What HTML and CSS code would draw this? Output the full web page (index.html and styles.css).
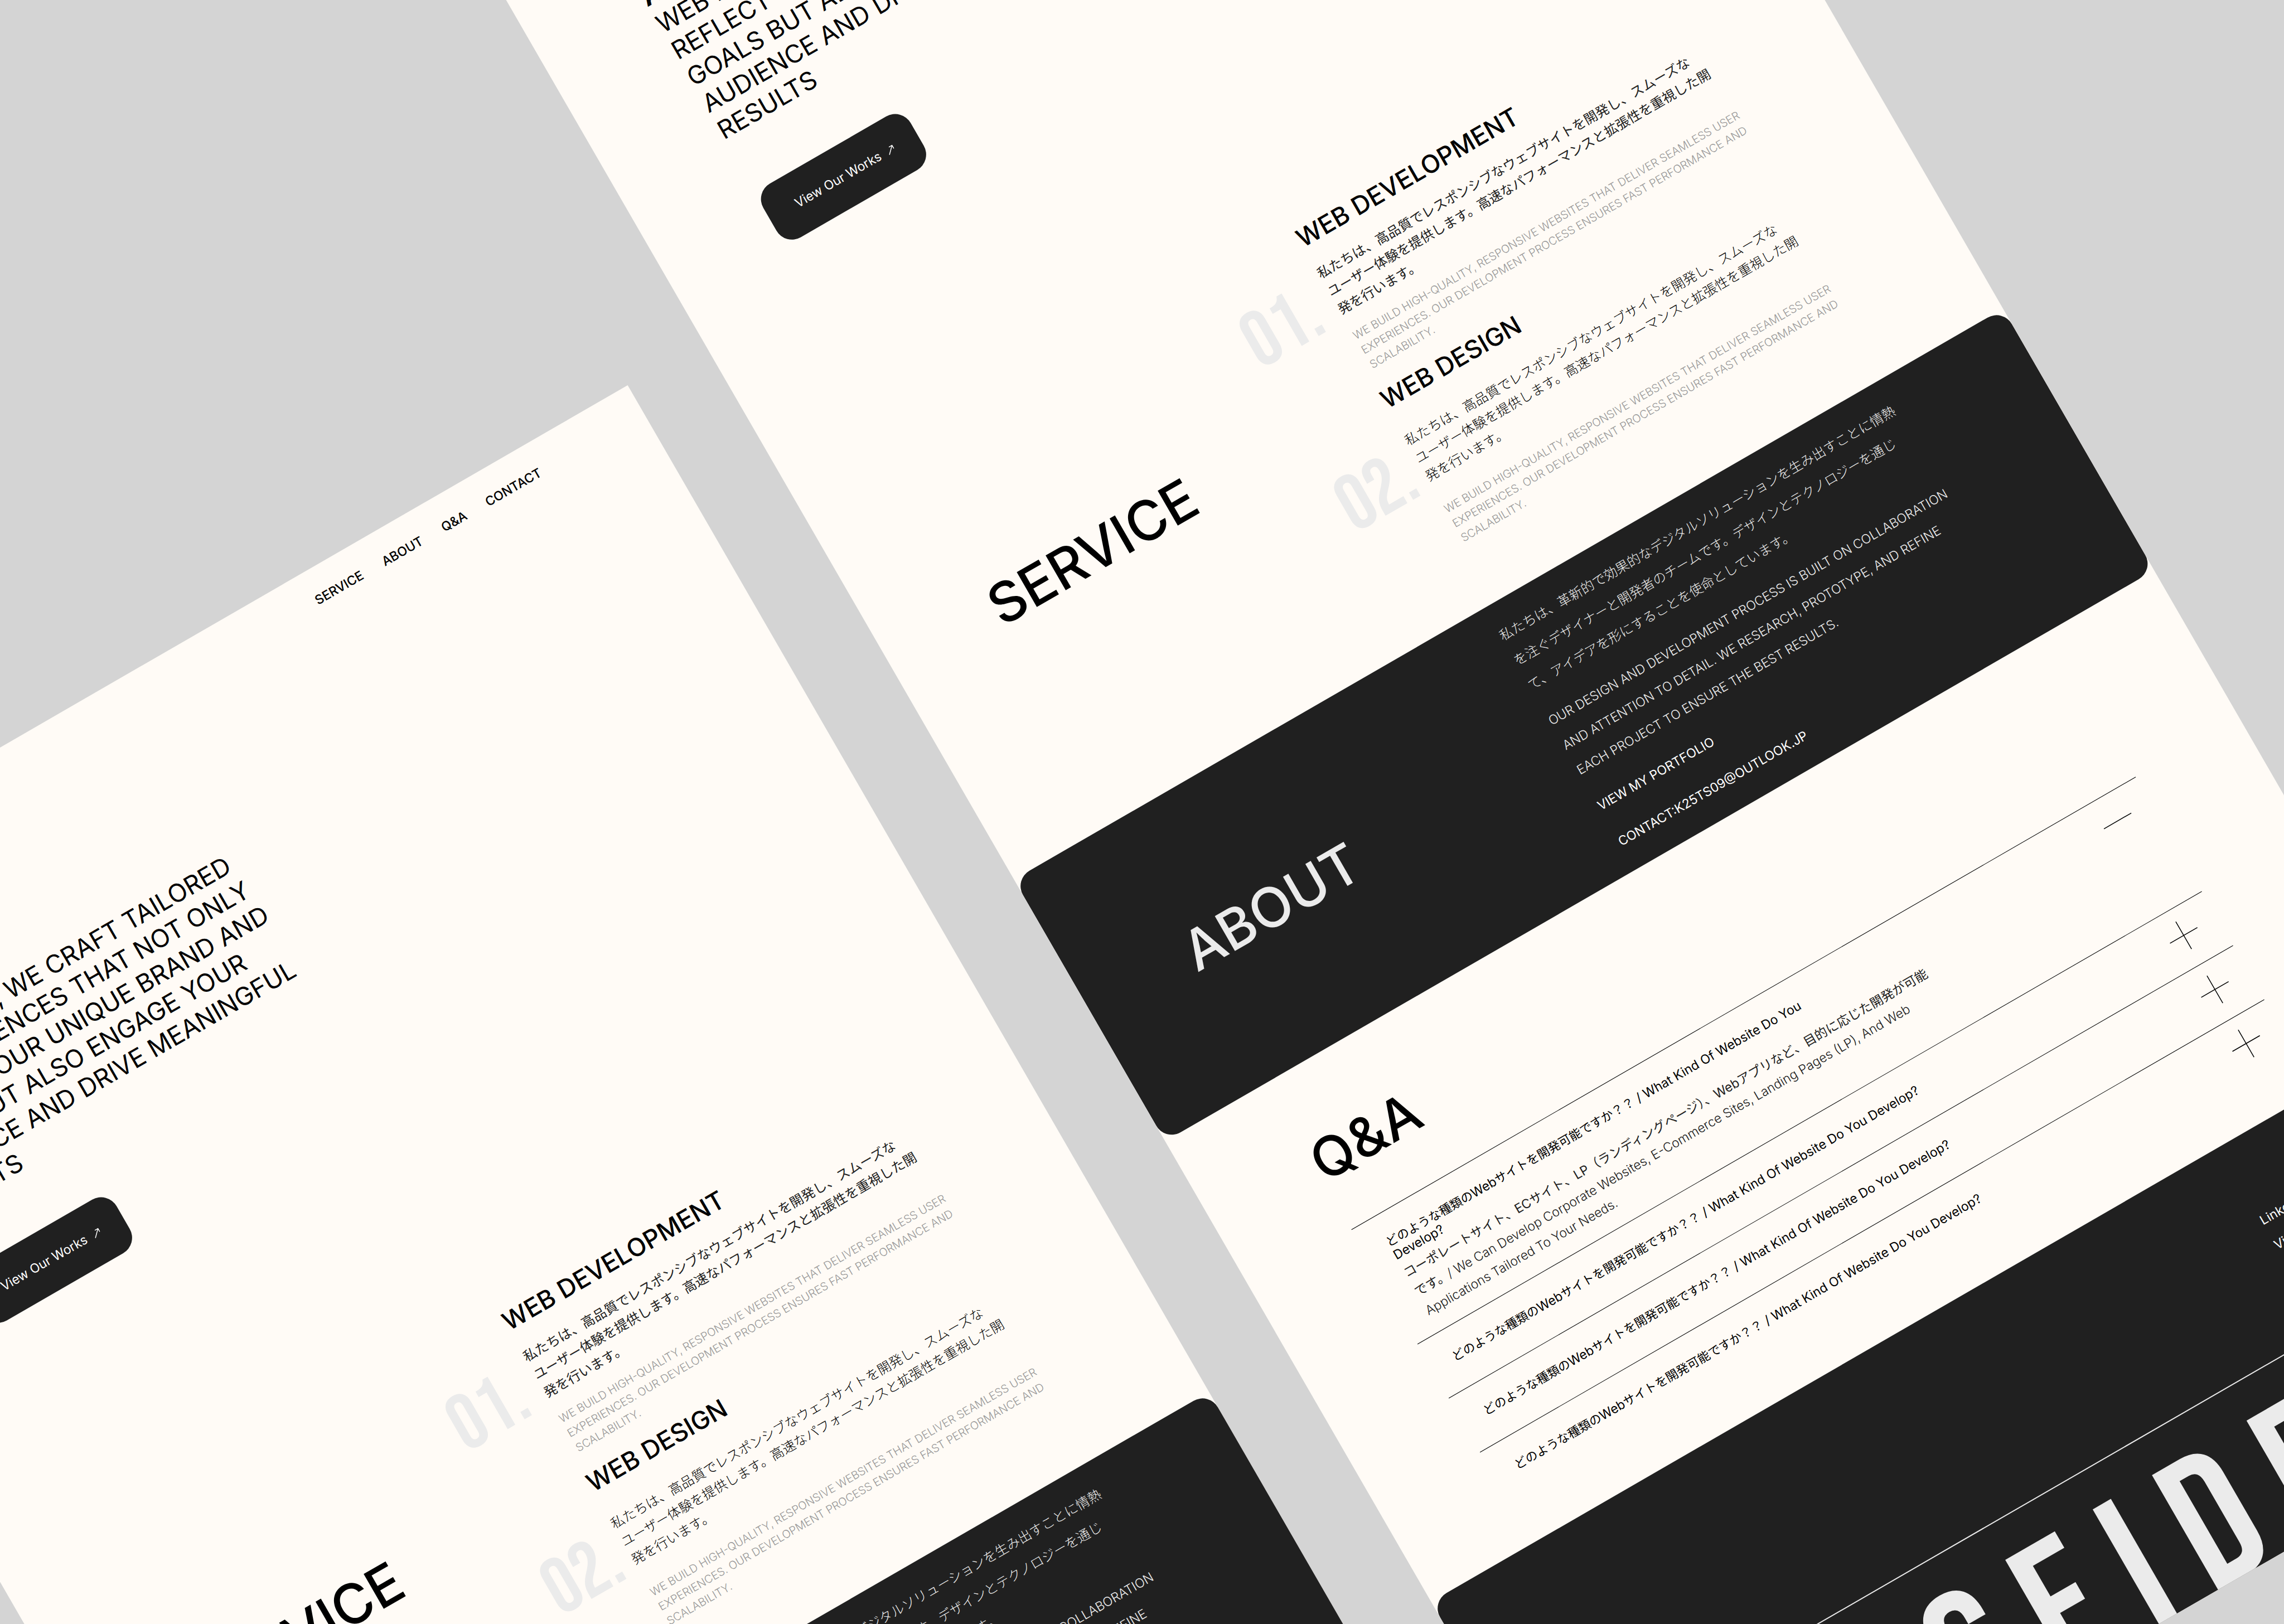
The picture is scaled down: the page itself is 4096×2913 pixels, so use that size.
FILE: index.html
```html
<!DOCTYPE html>
<html lang="en">
<head>
<meta charset="utf-8">
<meta name="viewport" content="width=device-width, initial-scale=1">
<title>Web studio</title>
<link rel="stylesheet" href="styles.css">
</head>
<body>
<main class="canvas">

  <article class="page page--left">
    <header class="header">
      <nav class="nav">
        <a href="#service">SERVICE</a>
        <a href="#about">ABOUT</a>
        <a href="#qa">Q&amp;A</a>
        <a href="#contact">CONTACT</a>
      </nav>
    </header>
    <section class="hero">
      <p class="hero__text"><strong>AT CODSEIDE</strong>, WE CRAFT TAILORED<br>WEB EXPERIENCES THAT NOT ONLY<br>REFLECT YOUR UNIQUE BRAND AND<br>GOALS BUT ALSO ENGAGE YOUR<br>AUDIENCE AND DRIVE MEANINGFUL<br>RESULTS</p>
      <button class="cta" type="button">View Our Works
        <svg class="cta__arrow" viewBox="0 0 14 14" aria-hidden="true"><path d="M.5 13.5 13 1M6.5 1H13V7.5"/></svg>
      </button>
    </section>
    <section class="services">
      <h2 class="title">SERVICE</h2>
      <ol class="services__list">
        <li class="service service--first">
          <span class="service__number">01.</span>
          <div class="service__body">
            <h3>WEB DEVELOPMENT</h3>
            <p class="service__ja" lang="ja">私たちは、高品質でレスポンシブなウェブサイトを開発し、スムーズなユーザー体験を提供します。高速なパフォーマンスと拡張性を重視した開発を行います。</p>
            <p class="service__en">WE BUILD HIGH-QUALITY, RESPONSIVE WEBSITES THAT DELIVER SEAMLESS USER EXPERIENCES. OUR DEVELOPMENT PROCESS ENSURES FAST PERFORMANCE AND SCALABILITY.</p>
          </div>
        </li>
        <li class="service service--second">
          <span class="service__number">02.</span>
          <div class="service__body">
            <h3>WEB DESIGN</h3>
            <p class="service__ja" lang="ja">私たちは、高品質でレスポンシブなウェブサイトを開発し、スムーズなユーザー体験を提供します。高速なパフォーマンスと拡張性を重視した開発を行います。</p>
            <p class="service__en">WE BUILD HIGH-QUALITY, RESPONSIVE WEBSITES THAT DELIVER SEAMLESS USER EXPERIENCES. OUR DEVELOPMENT PROCESS ENSURES FAST PERFORMANCE AND SCALABILITY.</p>
          </div>
        </li>
      </ol>
    </section>
    <section class="about">
      <h2 class="title title--light">ABOUT</h2>
      <div class="about__body">
        <p class="about__ja" lang="ja">私たちは、革新的で効果的なデジタルソリューションを生み出すことに情熱を注ぐデザイナーと開発者のチームです。デザインとテクノロジーを通じて、アイデアを形にすることを使命としています。</p>
        <p class="about__en">OUR DESIGN AND DEVELOPMENT PROCESS IS BUILT ON COLLABORATION AND ATTENTION TO DETAIL. WE RESEARCH, PROTOTYPE, AND REFINE EACH PROJECT TO ENSURE THE BEST RESULTS.</p>
        <a href="#portfolio">VIEW MY PORTFOLIO</a>
        <a href="mailto:K25TS09@OUTLOOK.JP">CONTACT:K25TS09@OUTLOOK.JP</a>
      </div>
    </section>
  </article>

  <article class="page page--right">
    <header class="header">
      <nav class="nav">
        <a href="#service">SERVICE</a>
        <a href="#about">ABOUT</a>
        <a href="#qa">Q&amp;A</a>
        <a href="#contact">CONTACT</a>
      </nav>
    </header>
    <section class="hero">
      <p class="hero__text"><strong>AT CODSEIDE</strong>, WE CRAFT TAILORED<br>WEB EXPERIENCES THAT NOT ONLY<br>REFLECT YOUR UNIQUE BRAND AND<br>GOALS BUT ALSO ENGAGE YOUR<br>AUDIENCE AND DRIVE MEANINGFUL<br>RESULTS</p>
      <button class="cta" type="button">View Our Works
        <svg class="cta__arrow" viewBox="0 0 14 14" aria-hidden="true"><path d="M.5 13.5 13 1M6.5 1H13V7.5"/></svg>
      </button>
    </section>
    <section class="services" id="service">
      <h2 class="title">SERVICE</h2>
      <ol class="services__list">
        <li class="service service--first">
          <span class="service__number">01.</span>
          <div class="service__body">
            <h3>WEB DEVELOPMENT</h3>
            <p class="service__ja" lang="ja">私たちは、高品質でレスポンシブなウェブサイトを開発し、スムーズなユーザー体験を提供します。高速なパフォーマンスと拡張性を重視した開発を行います。</p>
            <p class="service__en">WE BUILD HIGH-QUALITY, RESPONSIVE WEBSITES THAT DELIVER SEAMLESS USER EXPERIENCES. OUR DEVELOPMENT PROCESS ENSURES FAST PERFORMANCE AND SCALABILITY.</p>
          </div>
        </li>
        <li class="service service--second">
          <span class="service__number">02.</span>
          <div class="service__body">
            <h3>WEB DESIGN</h3>
            <p class="service__ja" lang="ja">私たちは、高品質でレスポンシブなウェブサイトを開発し、スムーズなユーザー体験を提供します。高速なパフォーマンスと拡張性を重視した開発を行います。</p>
            <p class="service__en">WE BUILD HIGH-QUALITY, RESPONSIVE WEBSITES THAT DELIVER SEAMLESS USER EXPERIENCES. OUR DEVELOPMENT PROCESS ENSURES FAST PERFORMANCE AND SCALABILITY.</p>
          </div>
        </li>
      </ol>
    </section>
    <section class="about" id="about">
      <h2 class="title title--light">ABOUT</h2>
      <div class="about__body">
        <p class="about__ja" lang="ja">私たちは、革新的で効果的なデジタルソリューションを生み出すことに情熱を注ぐデザイナーと開発者のチームです。デザインとテクノロジーを通じて、アイデアを形にすることを使命としています。</p>
        <p class="about__en">OUR DESIGN AND DEVELOPMENT PROCESS IS BUILT ON COLLABORATION AND ATTENTION TO DETAIL. WE RESEARCH, PROTOTYPE, AND REFINE EACH PROJECT TO ENSURE THE BEST RESULTS.</p>
        <a href="#portfolio">VIEW MY PORTFOLIO</a>
        <a href="mailto:K25TS09@OUTLOOK.JP">CONTACT:K25TS09@OUTLOOK.JP</a>
      </div>
    </section>
    <section class="qa" id="qa">
      <h2 class="title">Q&amp;A</h2>
      <div class="qa__list">
        <div class="qa__row qa__row--open">
          <div class="qa__text">
            <h3><span class="qa__ja" lang="ja">どのような種類の</span>Web<span class="qa__ja" lang="ja">サイトを開発可能ですか？？</span> / What Kind Of Website Do You<br>Develop?</h3>
            <p><span lang="ja">コーポレートサイト、ECサイト、LP（ランディングページ）、Webアプリなど、目的に応じた開発が可能です。</span>/ We Can Develop Corporate Websites, E-Commerce Sites, Landing Pages (LP), And Web Applications Tailored To Your Needs.</p>
          </div>
          <button class="qa__toggle" type="button" aria-expanded="true" aria-label="Close answer">
            <svg viewBox="0 0 57 57"><path d="M0 28.5H57"/></svg>
          </button>
        </div>
        <div class="qa__row">
          <h3 class="qa__text"><span class="qa__ja" lang="ja">どのような種類の</span>Web<span class="qa__ja" lang="ja">サイトを開発可能ですか？？</span> / What Kind Of Website Do You Develop?</h3>
          <button class="qa__toggle" type="button" aria-expanded="false" aria-label="Open answer">
            <svg viewBox="0 0 57 57"><path d="M0 28.5H57M28.5 0V57"/></svg>
          </button>
        </div>
        <div class="qa__row">
          <h3 class="qa__text"><span class="qa__ja" lang="ja">どのような種類の</span>Web<span class="qa__ja" lang="ja">サイトを開発可能ですか？？</span> / What Kind Of Website Do You Develop?</h3>
          <button class="qa__toggle" type="button" aria-expanded="false" aria-label="Open answer">
            <svg viewBox="0 0 57 57"><path d="M0 28.5H57M28.5 0V57"/></svg>
          </button>
        </div>
        <div class="qa__row">
          <h3 class="qa__text"><span class="qa__ja" lang="ja">どのような種類の</span>Web<span class="qa__ja" lang="ja">サイトを開発可能ですか？？</span> / What Kind Of Website Do You Develop?</h3>
          <button class="qa__toggle" type="button" aria-expanded="false" aria-label="Open answer">
            <svg viewBox="0 0 57 57"><path d="M0 28.5H57M28.5 0V57"/></svg>
          </button>
        </div>
      </div>
    </section>
    <footer class="footer" id="contact">
      <nav class="footer__links">
        <a href="#linkedin">LinkedIn</a>
        <a href="#portfolio">View Portfolio</a>
      </nav>
      <div class="wordmark"><span>S</span><span>E</span><span>I</span><span>D</span><span>E</span></div>
    </footer>
  </article>

</main>
</body>
</html>
```
FILE: styles.css
```css
:root {
  --ink: #202020;
  --paper: #fffbf6;
  --mist: #ebebeb;
  --gutter: 213px;
}

* { box-sizing: border-box; margin: 0; padding: 0; }

body {
  background: #d4d4d4;
  color: #000;
  font-family: Inter, "Noto Sans CJK JP", "Liberation Sans", sans-serif;
  font-weight: 400;
}

a { color: inherit; text-decoration: none; }
button { border: 0; background: none; font: inherit; color: inherit; cursor: pointer; }
ol { list-style: none; }
h2, h3 { font-weight: 500; }

.canvas {
  position: relative;
  width: 100vw;
  height: 100vh;
  overflow: hidden;
}

/* Two tilted page previews laid on the grey board */
.page {
  position: absolute;
  width: 50vw;
  background: var(--paper);
  line-break: strict;
  transform: rotate(-30deg);
  transform-origin: 0 0;
}
.page--left { left: -648px; top: 1715px; }
.page--right { left: 776px; top: -228px; overflow: hidden; }

.title {
  font-size: 99px;
  line-height: 120px;
}
.title--light { color: var(--mist); }

/* Header */
.header { padding: 43px var(--gutter) 0; }
.nav {
  display: flex;
  justify-content: flex-end;
  gap: 42px;
  font-size: 23px;
  line-height: 27px;
  font-weight: 500;
}

/* Hero */
.hero { padding: 287px var(--gutter) 0; }
.hero__text {
  font-size: 45px;
  line-height: 55px;
  white-space: nowrap;
}
.hero__text strong { font-weight: 700; }
.cta {
  display: flex;
  align-items: center;
  gap: 14px;
  margin-top: 98px;
  height: 111px;
  padding: 0 48px 0 54px;
  border-radius: 32px;
  background: var(--ink);
  color: #fff;
  font-size: 23px;
  line-height: 27px;
}
.cta__arrow {
  width: 14px;
  height: 14px;
  fill: none;
  stroke: currentColor;
  stroke-width: 1.5;
}

/* Services */
.services {
  display: flex;
  align-items: center;
  justify-content: space-between;
  padding: 423px var(--gutter) 113px 208px;
}
.services__list {
  display: flex;
  flex-direction: column;
  gap: 24px;
  width: 994px;
}
.service { display: flex; align-items: center; }
.service--first { gap: 34px; }
.service--second { gap: 20px; }
.service__number {
  flex: none;
  width: 140px;
  padding-top: 4px;
  color: var(--mist);
  font-family: "Bebas Neue", "Open Sans Condensed", "Liberation Sans", sans-serif;
  font-size: 142px;
  line-height: 142px;
}
.service__body { width: 806px; }
.service h3 {
  font-size: 45px;
  line-height: 55px;
}
.service__ja {
  margin-top: 26px;
  color: var(--ink);
  font-size: 24px;
  line-height: 37px;
}
.service__en {
  margin-top: 20px;
  color: #999;
  font-size: 20px;
  line-height: 30px;
  font-weight: 300;
}
.service--second .service__ja { margin-top: 38px; color: #000; font-weight: 300; }
.service--second .service__en { margin-top: 33px; }

/* About */
.about {
  display: flex;
  align-items: center;
  justify-content: space-between;
  padding: 34px 241px 31px 201px;
  border-radius: 32px;
  background: var(--ink);
  color: var(--mist);
}
.about__body {
  display: flex;
  flex-direction: column;
  align-items: flex-start;
  gap: 23px;
  width: 834px;
  font-size: 23px;
  line-height: 51px;
}
.about__ja { max-width: 820px; font-size: 24px; font-weight: 300; }
.about__en { font-weight: 350; }
.about a { color: #fff; }

/* Questions */
.qa { padding: 112px 214px 77px 210px; }
.qa__list { margin-top: 72px; }
.qa__row {
  display: flex;
  align-items: flex-start;
  justify-content: space-between;
  padding: 23px 39px 22px 43px;
  border-top: 1px solid #000;
}
.qa__text { padding-top: 16px; width: 1086px; }
.qa__row h3 {
  font-size: 23px;
  line-height: 27px;
  font-weight: 400;
}
.qa__ja { font-size: 22px; }
.qa__row p {
  margin-top: 4px;
  color: var(--ink);
  font-size: 23px;
  line-height: 39px;
  font-weight: 350;
}
.qa__row p [lang] { font-weight: 400; }
.qa__toggle { height: 66px; }
.qa__toggle svg {
  display: block;
  width: 57px;
  height: 57px;
  margin-bottom: 9px;
  fill: none;
  stroke: #000;
  stroke-width: 1.5;
}

/* Footer */
.footer {
  padding: 128px var(--gutter) 0;
  border-radius: 32px 32px 0 0;
  background: var(--ink);
  color: #fff;
}
.footer__links {
  display: flex;
  flex-direction: column;
  width: 205px;
  margin-left: auto;
  padding-bottom: 150px;
  font-size: 23px;
  line-height: 51px;
  white-space: nowrap;
}
.wordmark {
  display: flex;
  gap: 57px;
  height: 307px;
  padding: 34px 0 0 518px;
  border-top: 2px solid var(--mist);
  overflow: hidden;
  color: var(--mist);
  font-family: "Bebas Neue", "Open Sans Condensed", "Liberation Sans", sans-serif;
  font-size: 342px;
  line-height: 342px;
}
```
